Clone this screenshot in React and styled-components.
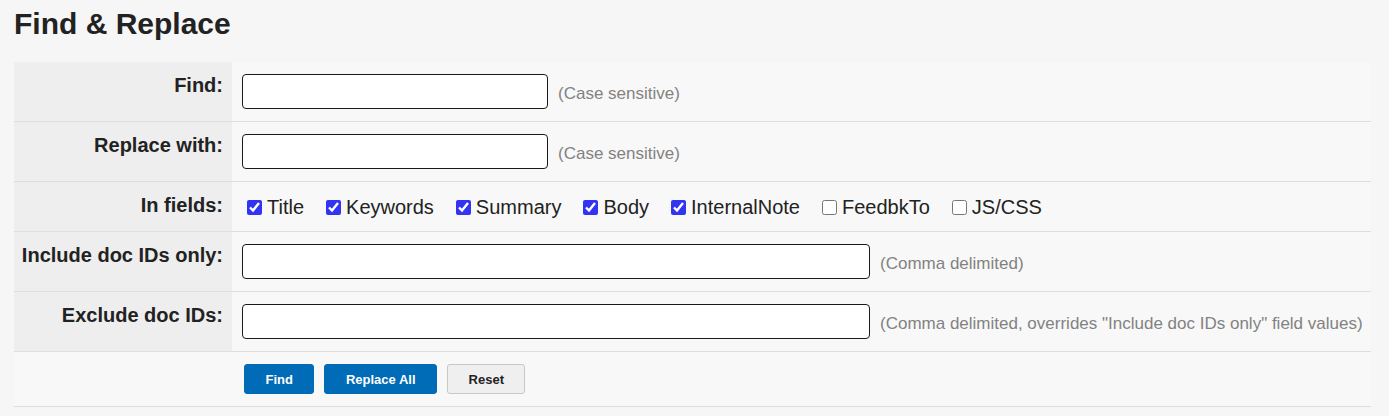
import React from "react";
import styled, { createGlobalStyle } from "styled-components";

const Global = createGlobalStyle`
  html, body { margin: 0; padding: 0; background: #f6f6f6; }
  body { font-family: "Liberation Sans", Arial, sans-serif; color: #222; font-size: 20px; }
`;

const Page = styled.div`
  padding: 0 18px 0 14px;
`;

const Title = styled.h1`
  margin: 6px 0 21px;
  font-size: 30px;
  line-height: 35px;
  font-weight: bold;
  color: #222;
`;

const Form = styled.div`
  background: #f8f8f8;
`;

const Row = styled.div`
  display: grid;
  grid-template-columns: 218px 1fr;
  border-bottom: 1px solid #dedede;
`;

const Label = styled.div`
  background: ${(p) => (p.$blank ? "transparent" : "#eeeeee")};
  text-align: right;
  font-weight: bold;
  font-size: 20px;
  line-height: 23px;
  padding: 12px 9px 0 0;
  color: #222;
`;

const Cell = styled.div`
  display: flex;
  align-items: center;
  padding: ${(p) => p.$pad || "12px 10px"};
`;

const TextInput = styled.input`
  box-sizing: border-box;
  width: ${(p) => (p.$wide ? "628px" : "306px")};
  height: 35px;
  margin: 0;
  padding: 5px 6px;
  border: 1px solid #1a1a1a;
  border-radius: 4px;
  background: #fff;
  font-family: "Liberation Sans", Arial, sans-serif;
  font-size: 18px;
  outline: none;
`;

const Hint = styled.span`
  margin: 4px 0 0 10px;
  font-size: 17px;
  line-height: 20px;
  color: #828282;
  white-space: nowrap;
`;

const Checks = styled.div`
  display: flex;
  gap: 17px;
  font-size: 20px;
  line-height: 23px;
`;

const CheckItem = styled.label`
  display: flex;
  align-items: center;
  gap: 5px;
  color: #222;
`;

const Box = styled.input`
  width: 15px;
  height: 15px;
  margin: 0 0 0 5px;
  accent-color: #3333f2;
`;

const Buttons = styled.div`
  display: flex;
  gap: 10px;
  padding-left: 2px;
`;

const Button = styled.button`
  box-sizing: border-box;
  height: 30px;
  padding: 0 20.5px;
  margin: 0;
  border-radius: 3px;
  font-family: "Liberation Sans", Arial, sans-serif;
  font-size: 13px;
  font-weight: bold;
  cursor: pointer;
  border: 1px solid ${(p) => (p.$primary ? "#006bb6" : "#c8c8c8")};
  background: ${(p) => (p.$primary ? "#006bb6" : "#efefef")};
  color: ${(p) => (p.$primary ? "#fff" : "#222")};
`;

const fields = [
  ["Title", true],
  ["Keywords", true],
  ["Summary", true],
  ["Body", true],
  ["InternalNote", true],
  ["FeedbkTo", false],
  ["JS/CSS", false],
];

export default function App() {
  return (
    <>
      <Global />
      <Page>
        <Title>Find &amp; Replace</Title>
        <Form>
          <Row>
            <Label>Find:</Label>
            <Cell>
              <TextInput type="text" />
              <Hint>(Case sensitive)</Hint>
            </Cell>
          </Row>
          <Row>
            <Label>Replace with:</Label>
            <Cell>
              <TextInput type="text" />
              <Hint>(Case sensitive)</Hint>
            </Cell>
          </Row>
          <Row>
            <Label>In fields:</Label>
            <Cell $pad="14px 10px 12px">
              <Checks>
                {fields.map(([name, on]) => (
                  <CheckItem key={name}>
                    <Box type="checkbox" defaultChecked={on} />
                    {name}
                  </CheckItem>
                ))}
              </Checks>
            </Cell>
          </Row>
          <Row>
            <Label>Include doc IDs only:</Label>
            <Cell>
              <TextInput type="text" $wide />
              <Hint>(Comma delimited)</Hint>
            </Cell>
          </Row>
          <Row>
            <Label>Exclude doc IDs:</Label>
            <Cell>
              <TextInput type="text" $wide />
              <Hint>(Comma delimited, overrides "Include doc IDs only" field values)</Hint>
            </Cell>
          </Row>
          <Row>
            <Label $blank />
            <Cell>
              <Buttons>
                <Button $primary>Find</Button>
                <Button $primary>Replace All</Button>
                <Button>Reset</Button>
              </Buttons>
            </Cell>
          </Row>
        </Form>
      </Page>
    </>
  );
}
